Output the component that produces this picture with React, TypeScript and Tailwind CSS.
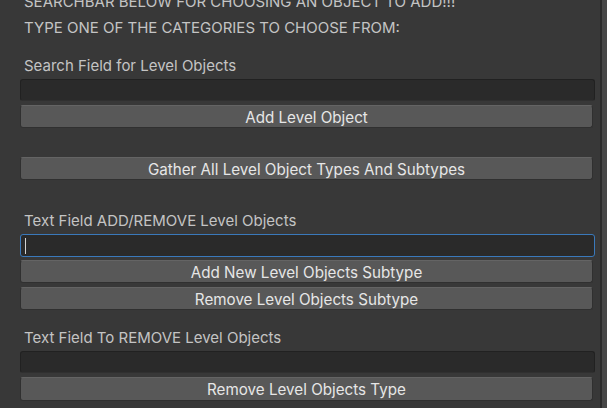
const font = { fontFamily: 'Inter, "Noto Sans", sans-serif' }

function Label({ children, className = '' }: { children: React.ReactNode; className?: string }) {
  return (
    <div className={`h-[26px] leading-[26px] pl-[4px] text-[15px] text-[#c4c4c4] whitespace-nowrap ${className}`}>
      {children}
    </div>
  )
}

function Field({ focused = false, className = '' }: { focused?: boolean; className?: string }) {
  return (
    <div
      className={`rounded-[3px] bg-[#2a2a2a] border ${
        focused ? 'h-[23px] border-[#3a79bb]' : 'h-[22px] border-[#212121] border-b-[#303030]'
      } flex items-center ${className}`}
    >
      {focused && <div className="ml-[4px] w-px h-[16px] bg-[#d2d2d2]" />}
    </div>
  )
}

function Button({ children, className = '' }: { children: React.ReactNode; className?: string }) {
  return (
    <div
      className={`h-[23px] pt-[3px] mr-[2px] rounded-[3px] bg-[#585858] border border-[#303030] border-t-[#646464] flex items-center justify-center text-[15.2px] text-[#e6e6e6] whitespace-nowrap ${className}`}
    >
      {children}
    </div>
  )
}

export default function App() {
  return (
    <div className="w-[607px] h-[408px] bg-[#383838] flex overflow-hidden" style={font}>
      <div className="flex-1 pl-[20px] pr-[5px] flex flex-col mt-[-11px]">
        <Label>SEARCHBAR BELOW FOR CHOOSING AN OBJECT TO ADD!!!</Label>
        <Label>TYPE ONE OF THE CATEGORIES TO CHOOSE FROM:</Label>

        <Label className="mt-[12px]">Search Field for Level Objects</Label>
        <Field />
        <Button className="mt-[4px]">Add Level Object</Button>

        <Button className="mt-[29px]">Gather All Level Object Types And Subtypes</Button>

        <Label className="mt-[28px]">Text Field ADD/REMOVE Level Objects</Label>
        <Field focused />
        <Button className="mt-[3px]">Add New Level Objects Subtype</Button>
        <Button className="mt-[4px]">Remove Level Objects Subtype</Button>

        <Label className="mt-[15px]">Text Field To REMOVE Level Objects</Label>
        <Field />
        <Button className="mt-[4px] h-[24px]">Remove Level Objects Type</Button>
      </div>

      {/* scrollbar strip */}
      <div className="w-[2px] bg-[#2b2b2b]" />
      <div className="w-[5px] bg-[#474747]" />
    </div>
  )
}
